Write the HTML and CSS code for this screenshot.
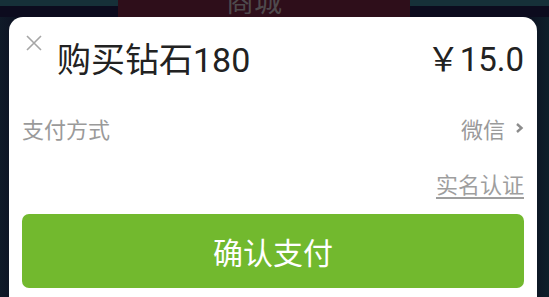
FILE: index.html
```html
<!DOCTYPE html>
<html lang="zh">
<head>
    <meta charset="UTF-8">
    <meta name="viewport" content="width=device-width, initial-scale=1.0">
    <title>购买钻石</title>
    <link rel="stylesheet" href="styles.css">
</head>
<body>
    <div class="topbar">
        <div class="shop-tab"><span>商城</span></div>
    </div>

    <div class="sheet">
        <div class="sheet-head">
            <span class="close">
                <svg width="16" height="16" viewBox="0 0 16 16"><path d="M1 1L15 15M15 1L1 15" stroke="#a6a6a6" stroke-width="1.6" fill="none"/></svg>
            </span>
            <span class="title">购买钻石180</span>
            <span class="price">￥15.0</span>
        </div>

        <div class="row">
            <span class="label">支付方式</span>
            <span class="method">微信
                <svg width="9" height="12" viewBox="0 0 9 12"><path d="M2 2L6.5 6L2 10" stroke="#8c8c8c" stroke-width="2.4" fill="none"/></svg>
            </span>
        </div>

        <div class="row verify-row">
            <a class="verify" href="#">实名认证</a>
        </div>

        <button class="pay-btn">确认支付</button>
    </div>
</body>
</html>
```

FILE: styles.css
```css
html, body {
    height: 100%;
    overflow: hidden;
}
body {
    margin: 0;
    font-family: Roboto, "Noto Sans CJK SC", sans-serif;
    background: linear-gradient(90deg, #0f1a28 0, #0b0a1d 6%, #0b0a1d 94%, #0e1f2a 100%);
}
.topbar {
    height: 17px;
    background: linear-gradient(180deg, #163039 0, #163039 6px, #0c0b1e 6px);
    overflow: hidden;
}
.shop-tab {
    margin-left: 118px;
    width: 292px;
    height: 17px;
    background-color: #2e0e1a;
    text-align: center;
    overflow: hidden;
}
.shop-tab span {
    display: block;
    margin-top: -12px;
    margin-left: -20px;
    font-size: 28px;
    line-height: 30px;
    color: #4e4a4d;
}
.sheet {
    margin-left: 9px;
    width: 528px;
    height: calc(100% - 17px);
    box-sizing: border-box;
    background: #fff;
    border-radius: 14px 14px 0 0;
    padding: 18px 13px 0 13px;
}
.sheet-head {
    display: flex;
    align-items: center;
    height: 44px;
}
.close {
    align-self: flex-start;
    margin-left: 4px;
    width: 16px;
    height: 16px;
}
.close svg {
    display: block;
}
.title {
    margin-left: 15px;
    font-size: 34px;
    color: #222;
}
.price {
    margin-left: auto;
    font-size: 33px;
    color: #222;
}
.row {
    display: flex;
    align-items: center;
    justify-content: space-between;
    height: 30px;
    margin-top: 34px;
}
.label {
    font-size: 22px;
    color: #9a9a9a;
}
.method {
    display: flex;
    align-items: center;
    gap: 10px;
    font-size: 22px;
    color: #9a9a9a;
}
.verify-row {
    justify-content: flex-end;
    margin-top: 25px;
}
.verify {
    font-size: 22px;
    color: #9e9e9e;
    text-decoration: underline;
    text-underline-offset: 4px;
}
.pay-btn {
    display: block;
    width: 100%;
    height: 74px;
    margin-top: 16px;
    border: none;
    border-radius: 7px;
    background-color: #72b92e;
    color: #fff;
    font-family: Roboto, "Noto Sans CJK SC", sans-serif;
    font-size: 30px;
    cursor: pointer;
}
```
